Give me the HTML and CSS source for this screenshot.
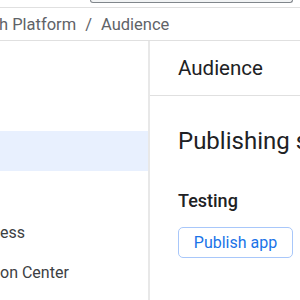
FILE: index.html
```html
<!DOCTYPE html>
<html>
<head>
<meta charset="utf-8">
<link rel="stylesheet" href="styles.css">
</head>
<body>
<div class="topbar">
  <div class="search"></div>
</div>
<div class="crumbs"><span class="crumb">h Platform</span><span class="sep">/</span><span class="crumb">Audience</span></div>
<div class="main">
  <nav class="side">
    <div class="item"></div>
    <div class="item"></div>
    <div class="item selected"></div>
    <div class="item"></div>
    <div class="item">ess</div>
    <div class="item">on Center</div>
  </nav>
  <section class="panel">
    <div class="panel-head">Audience</div>
    <div class="panel-body">
      <h1 class="title">Publishing status</h1>
      <h2 class="sub">Testing</h2>
      <button class="btn">Publish app</button>
    </div>
  </section>
</div>
</body>
</html>
```

FILE: styles.css
```css
* { box-sizing: border-box; }
html, body { margin: 0; padding: 0; background: #fff; }
body { font-family: Roboto, "Noto Sans", sans-serif; width: 300px; height: 300px; overflow: hidden; }

.topbar {
  height: 8px;
  border-bottom: 1px solid #e0e0e0;
  padding-left: 90px;
  display: flex;
}
.search {
  width: 203px;
  height: 3px;
  background: #f1f3f4;
  border: 1px solid #80868b;
  border-top: none;
  border-radius: 0 0 3px 3px;
}

.crumbs {
  height: 33px;
  border-bottom: 1px solid #e0e0e0;
  display: flex;
  align-items: center;
  font-size: 16.5px;
  color: #5f6368;
  white-space: nowrap;
}
.crumbs .crumb:first-child { margin-left: -1px; }
.sep { margin: 0 9px; }

.main { display: flex; height: 259px; }

.side {
  width: 150px;
  flex: none;
  border-right: 2px solid #e8e8e8;
  padding-top: 10px;
}
.item {
  height: 40px;
  display: flex;
  align-items: center;
  font-size: 16px;
  color: #3c4043;
  white-space: nowrap;
  padding-top: 2px;
}
.item.selected { background: #e8f0fe; }

.panel { flex: 1; min-width: 0; overflow: hidden; }
.panel-head {
  height: 55px;
  border-bottom: 1px solid #e0e0e0;
  padding-left: 28px;
  display: flex;
  align-items: center;
  font-size: 20.5px;
  color: #202124;
}
.panel-body { padding-left: 28px; white-space: nowrap; }
.title {
  margin: 29px 0 0;
  font-size: 24px;
  font-weight: 400;
  color: #202124;
  line-height: 32px;
}
.sub {
  margin: 32px 0 0;
  font-size: 18px;
  font-weight: 500;
  color: #202124;
  line-height: 24px;
}
.btn {
  margin-top: 14px;
  height: 31px;
  width: 115px;
  border: 1px solid #a8c7fa;
  border-radius: 5px;
  background: #fff;
  color: #1a73e8;
  font-family: inherit;
  font-size: 16px;
  padding: 0;
}
```
